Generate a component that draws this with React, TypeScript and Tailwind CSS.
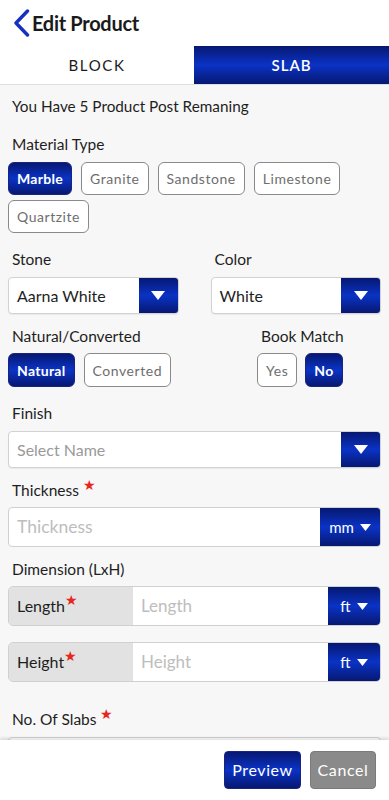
import React from "react";

const blueGrad = "bg-linear-to-b from-[#061872] via-[#0a33c6] to-[#061872]";

function Tri({ w = 14, h = 9 }: { w?: number; h?: number }) {
  return (
    <svg width={w} height={h} viewBox="0 0 14 9">
      <polygon points="0,0 14,0 7,9" fill="white" />
    </svg>
  );
}

function Star() {
  return <span className="text-[#e8261c] text-[14px] leading-none relative -top-[6px]">★</span>;
}

function Chip({ label, active, h = "h-[33px]" }: { label: string; active?: boolean; h?: string }) {
  return active ? (
    <div className={`${h} px-[8px] flex items-center rounded-[6px] border border-[#1a237e] ${blueGrad} text-white font-bold text-[14px] tracking-[0.3px]`}>
      {label}
    </div>
  ) : (
    <div className={`${h} px-[8px] flex items-center rounded-[6px] border border-[#8a8a8a] bg-white text-[#6e6e6e] text-[14px] tracking-[0.55px]`}>
      {label}
    </div>
  );
}

function Dropdown({ value, placeholder }: { value?: string; placeholder?: string }) {
  return (
    <div className="h-[37px] flex rounded-[4px] border border-[#d2d2d2] bg-white overflow-hidden shadow-[0_1px_1px_rgba(0,0,0,0.06)]">
      <div className={`flex-1 flex items-center pl-[8px] text-[16px] ${value ? "text-[#1e1e1e]" : "text-[#9a9a9a]"}`}>
        {value ?? placeholder}
      </div>
      <div className={`w-[39px] flex items-center justify-center ${blueGrad}`}>
        <Tri />
      </div>
    </div>
  );
}

function UnitButton({ unit, w }: { unit: string; w: string }) {
  return (
    <div className={`${w} flex items-center justify-center gap-[6px] ${blueGrad} text-white text-[15px]`}>
      <span>{unit}</span>
      <Tri w={11} h={7} />
    </div>
  );
}

function DimRow({ label }: { label: string }) {
  return (
    <div className="h-[40px] flex rounded-[5px] border border-[#d0d0d0] overflow-hidden">
      <div className="w-[124px] bg-[#e2e2e2] flex items-center pl-[8px] text-[16px] text-[#1e1e1e]">
        {label}
        <Star />
      </div>
      <div className="flex-1 bg-white flex items-center pl-[8px] text-[17px] text-[#bdbdbd]">{label}</div>
      <UnitButton unit="ft" w="w-[52px]" />
    </div>
  );
}

const lbl = "pl-[4px] text-[15.5px] leading-[20px] text-[#1e1e1e]";

export default function App() {
  return (
    <div
      className="w-[389px] h-[800px] flex flex-col bg-[#f7f7f7] overflow-hidden"
      style={{ fontFamily: "Lato, 'Open Sans', sans-serif" }}
    >
      <div className="flex-1 overflow-hidden">
        {/* Header */}
        <div className="h-[46px] bg-white flex items-center pl-[13px]">
          <svg width="17" height="28" viewBox="0 0 17 28">
            <polyline points="14.5,2 3,14 14.5,26" fill="none" stroke="#1630c2" strokeWidth="3.4" strokeLinecap="round" strokeLinejoin="round" />
          </svg>
          <span className="ml-[2px] text-[20px] font-bold text-[#1a1a1a] tracking-[-0.3px]">Edit Product</span>
        </div>
        {/* Tabs */}
        <div className="h-[39px] flex bg-white border-b border-[#dedede]">
          <div className="flex-1 flex items-center justify-center text-[15px] tracking-[1.6px] text-[#1a1a1a]">BLOCK</div>
          <div className={`w-[195px] flex items-center justify-center text-[15px] tracking-[1px] text-white font-semibold ${blueGrad}`}>SLAB</div>
        </div>

        <div className="px-[8px]">
          <div className="mt-[11px] pl-[4px] text-[15.3px] leading-[20px] text-[#1e1e1e]">You Have 5 Product Post Remaning</div>

          <div className={`mt-[18px] ${lbl}`}>Material Type</div>
          <div className="mt-[8px] flex flex-wrap gap-x-[9px] gap-y-[5px]">
            <Chip label="Marble" active />
            <Chip label="Granite" />
            <Chip label="Sandstone" />
            <Chip label="Limestone" />
            <Chip label="Quartzite" />
          </div>

          <div className="mt-[16px] grid grid-cols-2 gap-x-[32px]">
            <div>
              <div className={lbl}>Stone</div>
              <div className="mt-[8px]">
                <Dropdown value="Aarna White" />
              </div>
            </div>
            <div>
              <div className={lbl}>Color</div>
              <div className="mt-[8px]">
                <Dropdown value="White" />
              </div>
            </div>
          </div>

          <div className="mt-[12px] flex">
            <div className="flex-1">
              <div className={lbl}>Natural/Converted</div>
              <div className="mt-[7px] flex gap-[9px]">
                <Chip label="Natural" active h="h-[34px]" />
                <Chip label="Converted" h="h-[34px]" />
              </div>
            </div>
            <div className="w-[124px]">
              <div className={lbl}>Book Match</div>
              <div className="mt-[7px] flex gap-[8px]">
                <Chip label="Yes" h="h-[34px]" />
                <Chip label="No" active h="h-[34px]" />
              </div>
            </div>
          </div>

          <div className={`mt-[16px] ${lbl}`}>Finish</div>
          <div className="mt-[8px]">
            <Dropdown placeholder="Select Name" />
          </div>

          <div className={`mt-[12px] ${lbl}`}>
            Thickness <Star />
          </div>
          <div className="mt-[7px] h-[40px] flex rounded-[4px] border border-[#d0d0d0] bg-white overflow-hidden">
            <div className="flex-1 flex items-center pl-[8px] text-[17.5px] text-[#bdbdbd]">Thickness</div>
            <UnitButton unit="mm" w="w-[60px]" />
          </div>

          <div className={`mt-[12px] ${lbl}`}>Dimension (LxH)</div>
          <div className="mt-[7px]">
            <DimRow label="Length" />
          </div>
          <div className="mt-[16px]">
            <DimRow label="Height" />
          </div>

          <div className={`mt-[27px] ${lbl}`}>
            No. Of Slabs <Star />
          </div>
          <div className="mt-[8px] h-[40px] rounded-[4px] border border-[#d0d0d0] bg-white" />
        </div>
      </div>

      {/* Footer */}
      <div className="h-[60px] shrink-0 bg-white shadow-[0_-2px_3px_rgba(0,0,0,0.12)] flex items-start justify-end gap-[9px] pr-[13px] pt-[11px] relative">
        <div className={`h-[38px] w-[77px] flex items-center justify-center rounded-[4px] border border-[#1a237e] ${blueGrad} text-white text-[16px] tracking-[0.6px]`}>
          Preview
        </div>
        <div className="h-[38px] w-[66px] flex items-center justify-center rounded-[4px] border border-[#7a7a7a] bg-[#8a8a8a] text-white text-[16px] tracking-[0.6px]">
          Cancel
        </div>
      </div>
    </div>
  );
}
